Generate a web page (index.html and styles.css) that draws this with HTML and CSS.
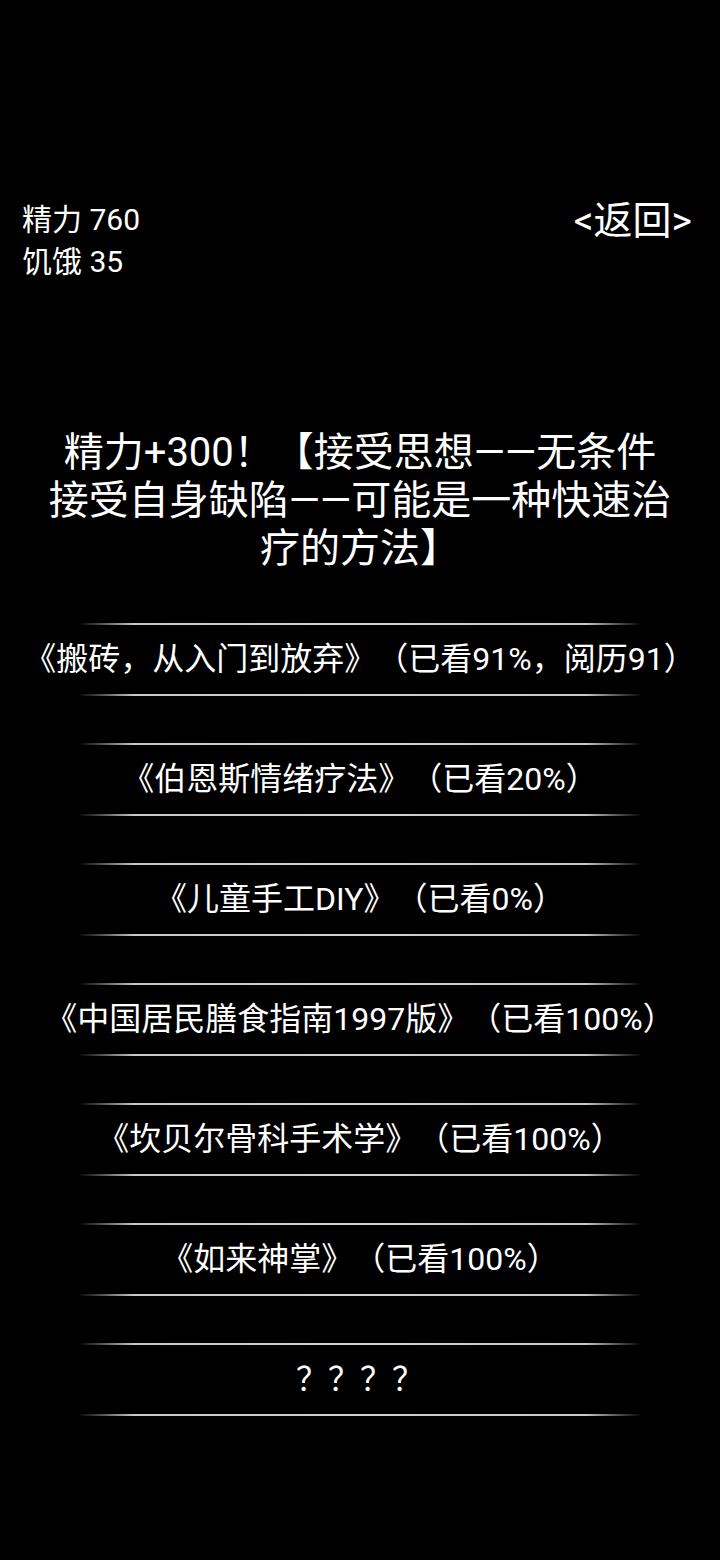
FILE: index.html
```html
<!DOCTYPE html>
<html lang="zh-CN">
<head>
  <meta charset="UTF-8" />
  <title>书架</title>
  <link rel="stylesheet" href="styles.css">
</head>
<body>
  <header class="top-bar">
    <div class="stats">
      <div>精力 760</div>
      <div>饥饿 35</div>
    </div>
    <a class="back-link">&lt;返回&gt;</a>
  </header>

  <h1 class="message">精力+300！【接受思想——无条件<br>接受自身缺陷——可能是一种快速治<br>疗的方法】</h1>

  <ul class="book-list">
    <li class="book">《搬砖，从入门到放弃》（已看91%，阅历91）</li>
    <li class="book">《伯恩斯情绪疗法》（已看20%）</li>
    <li class="book">《儿童手工DIY》（已看0%）</li>
    <li class="book">《中国居民膳食指南1997版》（已看100%）</li>
    <li class="book">《坎贝尔骨科手术学》（已看100%）</li>
    <li class="book">《如来神掌》（已看100%）</li>
    <li class="book">？？？？</li>
  </ul>
</body>
</html>
```

FILE: styles.css
```css
body {
  margin: 0;
  background-color: #000;
  color: #fff;
  font-family: Roboto, "Noto Sans CJK SC", sans-serif;
  text-spacing-trim: space-all;
  width: 720px;
  min-height: 1560px;
}

.top-bar {
  display: flex;
  justify-content: space-between;
  align-items: flex-start;
  padding: 199px 28px 0 22px;
}

.stats {
  font-size: 30px;
  line-height: 42px;
}

.back-link {
  font-size: 39px;
  line-height: 44px;
  cursor: pointer;
}

.message {
  margin: 146px 0 0;
  font-size: 40px;
  font-weight: normal;
  line-height: 48px;
  text-align: center;
}

.book-list {
  list-style: none;
  margin: 50px 0 0;
  padding: 0;
  display: flex;
  flex-direction: column;
  gap: 47px;
}

.book {
  display: flex;
  flex-direction: column;
  align-items: center;
  font-size: 32px;
  line-height: 69px;
  white-space: nowrap;
}

.book::before,
.book::after {
  content: "";
  display: block;
  width: 564px;
  height: 2px;
  background: linear-gradient(to right, rgba(200,200,200,0), #c8c8c8 10%, #d0d0d0 50%, #c8c8c8 90%, rgba(200,200,200,0));
}
```
